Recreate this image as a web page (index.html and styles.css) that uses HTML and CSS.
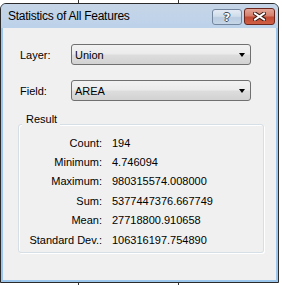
FILE: index.html
```html
<!DOCTYPE html>
<html lang="en">
<head>
  <meta charset="UTF-8" />
  <title>Statistics of All Features</title>
  <link rel="stylesheet" href="styles.css">
</head>
<body>
<div class="window">

  <!-- TITLE BAR -->
  <div class="titlebar">
    <span class="title">Statistics of All Features</span>
    <div class="caption-btns">
      <div class="cap help"><span>?</span></div>
      <div class="cap close">
        <svg width="13" height="9" viewBox="0 0 13 9">
          <path d="M2 1.5 L11 7.5 M11 1.5 L2 7.5" stroke="#3b1a14" stroke-width="4" stroke-linecap="square" fill="none"/>
          <path d="M2 1.5 L11 7.5 M11 1.5 L2 7.5" stroke="#fff" stroke-width="2" stroke-linecap="square" fill="none"/>
        </svg>
      </div>
    </div>
  </div>

  <!-- CLIENT -->
  <div class="client">
    <div class="field-row">
      <label>Layer:</label>
      <div class="combo"><span>Union</span><i class="arrow"></i></div>
    </div>
    <div class="field-row">
      <label>Field:</label>
      <div class="combo"><span>AREA</span><i class="arrow"></i></div>
    </div>

    <div class="group">
      <span class="group-title">Result</span>
      <div class="stats">
        <span class="k">Count:</span><span class="v">194</span>
        <span class="k">Minimum:</span><span class="v">4.746094</span>
        <span class="k">Maximum:</span><span class="v">980315574.008000</span>
        <span class="k">Sum:</span><span class="v">5377447376.667749</span>
        <span class="k">Mean:</span><span class="v">27718800.910658</span>
        <span class="k">Standard Dev.:</span><span class="v">106316197.754890</span>
      </div>
    </div>
  </div>

</div>
</body>
</html>
```

FILE: styles.css
```css
* { box-sizing: border-box; margin: 0; padding: 0; }
body {
  font-family: 'Liberation Sans', Arial, sans-serif;
  font-size: 11px;
  color: #000;
  background:
    linear-gradient(90deg, transparent 78px, #333 78px, #333 79px, transparent 79px,
                    transparent 178px, #333 178px, #333 179px, transparent 179px),
    #fff;
  width: 282px;
  height: 285px;
  overflow: hidden;
}

/* WINDOW FRAME */
.window {
  margin-top: 3px;
  width: 279px;
  height: 280px;
  border: 1px solid #2b2b2b;
  border-radius: 6px 6px 0 0;
  background: #9cc6ec;
  padding: 0 2px 2px 2px;
  display: flex;
  flex-direction: column;
}

/* TITLE BAR */
.titlebar {
  height: 24px;
  margin: 0 -2px;
  padding: 0 3px 0 7px;
  border-radius: 5px 5px 0 0;
  background: linear-gradient(#c6d5e7, #bcd2ea);
  display: flex;
  justify-content: space-between;
  align-items: flex-start;
}
.title {
  font-size: 12px;
  letter-spacing: -0.25px;
  line-height: 24px;
  color: #000;
}
.caption-btns { display: flex; gap: 2px; margin-top: 4px; }
.cap {
  display: flex;
  align-items: center;
  justify-content: center;
  border-radius: 3px;
}
.cap.help {
  width: 30px;
  height: 16px;
  margin-top: 1px;
  border: 1px solid #74869d;
  background: linear-gradient(#e4ebf4 0%, #d0dcea 45%, #b9cbe0 55%, #c6d6e8 100%);
}
.cap.help span {
  font-family: 'DejaVu Sans', sans-serif;
  font-size: 11px;
  font-weight: bold;
  color: #fff;
  text-shadow: 1px 0 #3d4a5c, -1px 0 #3d4a5c, 0 1px #3d4a5c, 0 -1px #3d4a5c;
}
.cap.close {
  width: 31px;
  height: 17px;
  border: 1px solid #6d261c;
  background: linear-gradient(#e3a697 0%, #d6806d 45%, #c14a34 55%, #cf5f44 100%);
}

/* CLIENT AREA */
.client {
  flex: 1;
  background: #f0f0f0;
  padding: 16px 0 0 15px;
}
.field-row {
  display: flex;
  align-items: center;
  padding-left: 2px;
  height: 21px;
  margin-bottom: 15px;
}
.field-row label { width: 51px; }
.combo {
  width: 180px;
  height: 21px;
  border: 1px solid #707070;
  border-radius: 3px;
  background: linear-gradient(#f2f2f2 0%, #ebebeb 48%, #dddddd 52%, #d2d2d2 100%);
  display: flex;
  align-items: center;
  justify-content: space-between;
  padding: 0 5px 0 3px;
}
.arrow {
  width: 0;
  height: 0;
  border-left: 3.5px solid transparent;
  border-right: 3.5px solid transparent;
  border-top: 4px solid #000;
  margin-top: 1px;
}

/* RESULT GROUP */
.group {
  position: relative;
  width: 246px;
  height: 129px;
  margin-top: 23px;
  border: 1px solid #d5dfe5;
  border-radius: 3px;
  box-shadow: inset 1px 1px 0 #fff, 1px 1px 0 #fff;
}
.group-title {
  position: absolute;
  top: -12px;
  left: 3px;
  padding: 0 3px 0 4px;
  line-height: 13px;
  background: #f0f0f0;
}
.stats {
  display: grid;
  grid-template-columns: 83px auto;
  column-gap: 10px;
  grid-auto-rows: 19.4px;
  align-items: center;
  padding-top: 8px;
}
.stats .k { text-align: right; }
```
